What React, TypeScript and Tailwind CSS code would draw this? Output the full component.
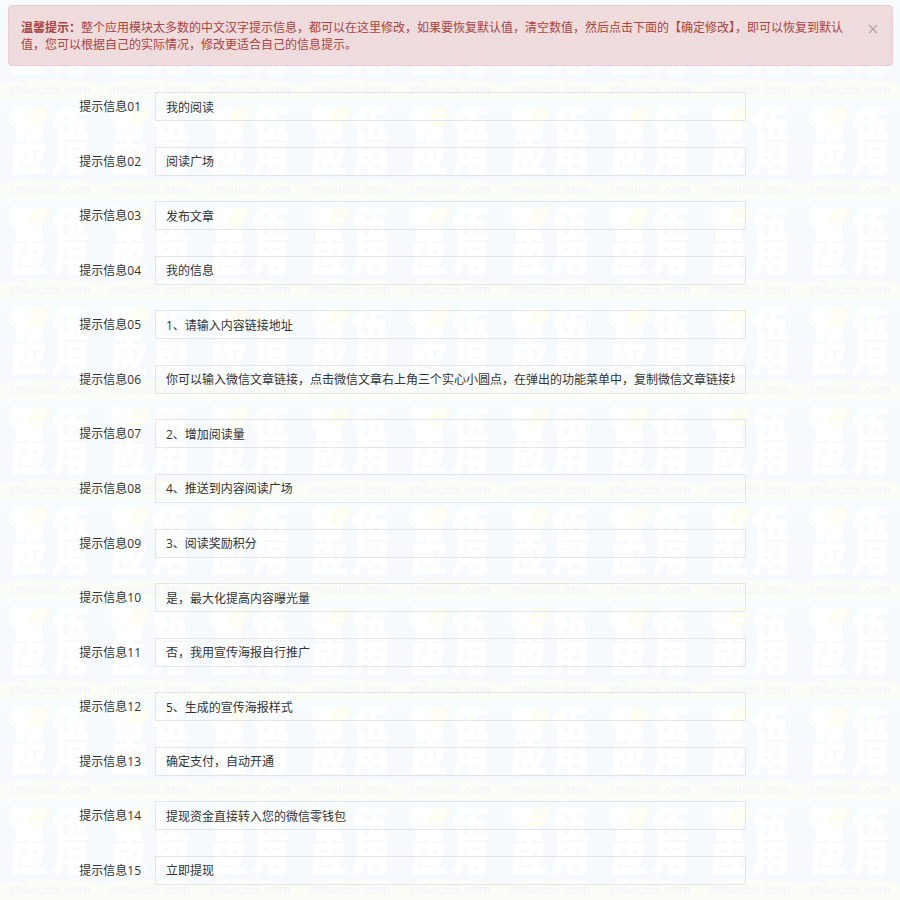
import { useState } from 'react'

const messages = [
  '我的阅读',
  '阅读广场',
  '发布文章',
  '我的信息',
  '1、请输入内容链接地址',
  '你可以输入微信文章链接，点击微信文章右上角三个实心小圆点，在弹出的功能菜单中，复制微信文章链接地址',
  '2、增加阅读量',
  '4、推送到内容阅读广场',
  '3、阅读奖励积分',
  '是，最大化提高内容曝光量',
  '否，我用宣传海报自行推广',
  '5、生成的宣传海报样式',
  '确定支付，自动开通',
  '提现资金直接转入您的微信零钱包',
  '立即提现',
]

function Watermark() {
  return (
    <svg className="absolute inset-0 w-full h-full pointer-events-none" aria-hidden="true">
      <defs>
        <linearGradient id="tint" x1="0" y1="0" x2="0" y2="1">
          <stop offset="0" stopColor="#f7fcff" />
          <stop offset="0.4" stopColor="#f6fafe" />
          <stop offset="1" stopColor="#f6fafe" />
        </linearGradient>
        <pattern id="tile" width="100" height="100" patternUnits="userSpaceOnUse">
          <rect width="100" height="100" fill="url(#tint)" />
          <path d="M0 84 Q22 80 50 80 T100 84 V100 H0 Z" fill="#fbfef6" />
          <g
            fill="#ffffff"
            stroke="#ffffff"
            strokeWidth="2"
            fontSize="35"
            className="font-['Noto_Sans_CJK_SC',sans-serif] font-bold"
          >
            <text x="11" y="37">智</text>
            <text x="53" y="37">伍</text>
            <text x="11" y="71">应</text>
            <text x="53" y="71">用</text>
          </g>
          {/* browser-style "e" ring with its orbit */}
          <g fill="none" stroke="#fffdec">
            <path d="M33 17 H47 A7.5 7.5 0 1 0 45 22" strokeWidth="3" />
            <path d="M31 25 C27 20 45 5 49 8 C50 9 50 11 48 13" strokeWidth="1.5" />
          </g>
          <text
            x="50"
            y="94"
            textAnchor="middle"
            fontSize="13"
            fill="#f3f6fa"
            className="font-['Liberation_Sans',sans-serif] font-bold"
          >
            zhiwu55.com
          </text>
        </pattern>
      </defs>
      <rect width="100%" height="100%" fill="url(#tile)" />
    </svg>
  )
}

export default function App() {
  const [values, setValues] = useState(messages)
  const [showTip, setShowTip] = useState(true)

  const updateValue = (index: number, value: string) => {
    setValues((prev) => prev.map((item, i) => (i === index ? value : item)))
  }

  return (
    <div className="relative isolate min-h-screen flex flex-col bg-[#f6fbff] text-xs text-[#333333] font-['Open_Sans','Noto_Sans_CJK_SC',sans-serif]">
      <Watermark />

      {showTip && (
        <div
          role="alert"
          className="relative mt-[5px] ml-2 mr-[7px] flex items-start rounded-sm border border-[#ebccd1] bg-[#ecd3d5]/80 pt-[13px] pb-3 pl-3 pr-3 leading-[17px] text-[#a94442]"
        >
          <p className="flex-1">
            <strong className="font-bold">温馨提示：</strong>
            整个应用模块太多数的中文汉字提示信息，都可以在这里修改，如果要恢复默认值，清空数值，然后点击下面的【确定修改】，即可以恢复到默认值，您可以根据自己的实际情况，修改更适合自己的信息提示。
          </p>
          <button
            type="button"
            onClick={() => setShowTip(false)}
            className="ml-3 mt-[3px] p-0.5 text-[#b5a5a8]"
            aria-label="关闭"
          >
            <svg width="10" height="10" viewBox="0 0 10 10" stroke="currentColor" strokeWidth="1.3">
              <path d="M1 1 L9 9 M9 1 L1 9" />
            </svg>
          </button>
        </div>
      )}

      <form className="relative flex-1 flex flex-col justify-between pt-[26px] pb-[15px] pr-[154px]">
        {values.map((value, index) => {
          const number = String(index + 1).padStart(2, '0')
          return (
            <div key={number} className="flex items-start">
              <label htmlFor={`message-${number}`} className="w-[141px] shrink-0 text-right leading-[29px]">
                提示信息{number}
              </label>
              <input
                id={`message-${number}`}
                type="text"
                value={value}
                onChange={(e) => updateValue(index, e.target.value)}
                className="ml-[14px] h-[29px] min-w-0 flex-1 border border-[#e2e6e9] bg-transparent px-2.5 outline-none focus:border-[#b8c4cc]"
              />
            </div>
          )
        })}
      </form>
    </div>
  )
}
